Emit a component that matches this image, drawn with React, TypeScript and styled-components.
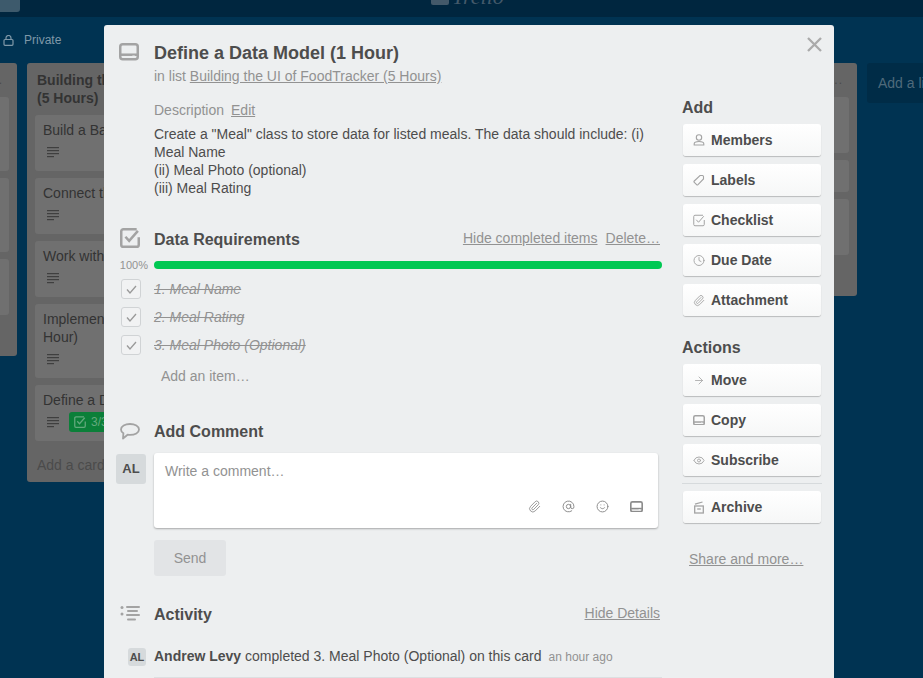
import { FC, ReactNode } from "react";
import styled, { createGlobalStyle } from "styled-components";
import { ArrowRight, AtSign, Clock, Eye, Paperclip, Smile } from "lucide-react";

const GlobalStyle = createGlobalStyle`
    html, body { margin: 0; height: 100%; overflow: hidden; }
    body {
        font-family: "Liberation Sans", Arial, sans-serif;
        font-size: 14px;
        line-height: 18px;
        color: #4d4d4d;
        background: #003352;
    }
`;

// --- icons that the packages don't have in this shape

const CardIcon: FC<{ size: number }> = ({ size }) => (
    <svg width={size} height={size * 0.88} viewBox="0 0 24 21" fill="none">
        <rect x="1.5" y="1.5" width="21" height="18" rx="3" stroke="currentColor" strokeWidth="3" />
        <rect x="2" y="12.5" width="20" height="3" fill="currentColor" />
        <rect x="16" y="15" width="3" height="2" fill="#edeff0" />
    </svg>
);

const CheckBoxIcon: FC<{ size: number; weight?: number }> = ({ size, weight = 3 }) => (
    <svg width={size} height={size} viewBox="0 0 24 24" fill="none">
        <path d="M20 1.5H4A2.5 2.5 0 0 0 1.5 4v16A2.5 2.5 0 0 0 4 22.5h16a2.5 2.5 0 0 0 2.5-2.5v-9" stroke="currentColor" strokeWidth={weight} />
        <path d="M6.5 10.5 11 15.5 21.5 3.5" stroke="currentColor" strokeWidth={weight} />
    </svg>
);

const BubbleIcon = () => (
    <svg width="20" height="17" viewBox="0 0 20 17" fill="none">
        <path d="M10 1C5 1 1 3 1 6.5c0 1.6 1 2.9 2.4 3.8L3 15.5l4.6-3.8c.8.1 1.6.2 2.4.2 5 0 9-2.100 9-5.400S15 1 10 1Z" stroke="currentColor" strokeWidth="1.8" strokeLinejoin="round" />
    </svg>
);

const ActivityIcon = () => (
    <svg width="20" height="17" viewBox="0 0 20 17" fill="currentColor">
        <circle cx="2" cy="2.500" r="1.500" />
        <circle cx="2" cy="9" r="1.500" />
        <rect x="6" y="1" width="14" height="2" rx="1" />
        <rect x="7" y="5" width="11" height="2" rx="1" />
        <rect x="6" y="9" width="14" height="2" rx="1" />
        <rect x="7" y="13.500" width="9" height="2" rx="1" />
    </svg>
);

const PersonIcon = () => (
    <svg width="12" height="12" viewBox="0 0 12 12" fill="none" stroke="currentColor" strokeWidth="1.100">
        <circle cx="6" cy="3.500" r="2.700" />
        <path d="M1.200 11V9.800C1.200 8.500 3 7.500 6 7.500s4.800 1 4.800 2.300V11Z" />
    </svg>
);

const TagIcon = () => (
    <svg width="12" height="12" viewBox="0 0 12 12" fill="none" stroke="currentColor" strokeWidth="1.100">
        <path d="M7 1.500h2.500a1.200 1.200 0 0 1 1 1V5L5 10.700a1 1 0 0 1-1.400 0L1.300 8.400a1 1 0 0 1 0-1.400Z" />
    </svg>
);

const ArchiveIcon = () => (
    <svg width="12" height="13" viewBox="0 0 12 13" fill="none" stroke="currentColor" strokeWidth="1.300">
        <path d="M2 3.200 9.500 1" />
        <rect x="1.700" y="5" width="8.600" height="7" />
        <path d="M4.200 8h3.600" />
    </svg>
);

const LockIcon = () => (
    <svg width="11" height="11" viewBox="0 0 11 11" fill="none" stroke="currentColor" strokeWidth="1.200">
        <rect x="1" y="4.500" width="9" height="5.800" rx="1" />
        <path d="M3 4.500V3a2.500 2.500 0 0 1 5 0v1.500" />
    </svg>
);

const LinesIcon = () => (
    <svg width="12" height="11" viewBox="0 0 12 11" fill="currentColor">
        <rect y="0" width="12" height="1.200" />
        <rect y="3" width="12" height="1.200" />
        <rect y="6" width="12" height="1.200" />
        <rect y="9" width="7" height="1.200" />
    </svg>
);

// --- dimmed board behind the card

const Page = styled.div`
    position: relative;
    height: 100vh;
    overflow: hidden;
`;

const TopBar = styled.header`
    display: flex;
    height: 17px;
    background: #00263f;
    overflow: hidden;
`;

const BackButton = styled.div`
    width: 20px;
    height: 12px;
    background: #3d5a6c;
    border-radius: 0 0 3px 0;
`;

const Logo = styled.div`
    display: flex;
    align-items: flex-end;
    gap: 3px;
    height: 5px;
    margin-left: 411px;
    color: #43596a;
    font-family: "Liberation Serif", serif;
    font-style: italic;
    font-size: 22px;
    line-height: 16px;
`;

const LogoMark = styled.div`
    width: 18px;
    height: 5px;
    background: #43596a;
    border-radius: 0 0 2px 2px;
    flex: none;
`;

const BoardBar = styled.div`
    display: flex;
    align-items: center;
    gap: 10px;
    height: 46px;
    padding-left: 3px;
    color: #7f98a8;
    font-size: 12px;
`;

const Board = styled.div`
    display: flex;
    align-items: flex-start;
    gap: 10px;
    margin-left: -253px;
`;

const List = styled.section`
    flex: none;
    width: 270px;
    box-sizing: border-box;
    padding: 8px 8px 0;
    background: #656565;
    border-radius: 3px;
    color: #333;
`;

const ListTitle = styled.h2`
    margin: 0;
    padding: 0 40px 8px 2px;
    font-size: 14px;
    line-height: 18px;
    font-weight: bold;
`;

const ListDots = styled.div`
    height: 18px;
    margin-bottom: 8px;
    padding-right: 6px;
    text-align: right;
    color: #4a4a4a;
    font-size: 12px;
    letter-spacing: 1px;
`;

const Card = styled.div<{ $height: number }>`
    height: ${p => p.$height}px;
    box-sizing: border-box;
    margin-bottom: 7px;
    padding: 6px 8px;
    background: #707070;
    border-radius: 3px;
`;

const CardBadges = styled.div`
    display: flex;
    align-items: center;
    gap: 10px;
    height: 20px;
    margin-top: 3px;
    padding-left: 4px;
    color: #3f3f3f;
`;

const CheckBadge = styled.span`
    display: flex;
    align-items: center;
    gap: 5px;
    height: 20px;
    padding: 0 6px 0 5px;
    background: #0b7f39;
    border-radius: 3px;
    color: #63a97d;
    font-size: 12px;
`;

const AddCard = styled.div`
    padding: 8px 2px;
    color: #4b4b4b;
`;

const AddList = styled.div`
    flex: none;
    width: 270px;
    height: 40px;
    box-sizing: border-box;
    padding: 11px;
    background: #002c47;
    border-radius: 3px;
    color: #4f6a7b;
`;

// --- card window

const Overlay = styled.div`
    position: absolute;
    inset: 0;
    padding: 25px 0 0 104px;
    overflow: hidden;
`;

const Window = styled.div`
    position: relative;
    display: flex;
    gap: 20px;
    width: 730px;
    height: 700px;
    box-sizing: border-box;
    padding-right: 12px;
    background: #edeff0;
    border-radius: 3px 3px 0 0;
`;

const CloseButton = styled.svg`
    position: absolute;
    top: 12px;
    right: 12px;
    color: #aaa;
`;

const Main = styled.main`
    flex: none;
    width: 558px;
    padding-top: 16px;
`;

const Row = styled.div<{ $top?: number }>`
    display: flex;
    margin-top: ${p => p.$top ?? 0}px;
`;

const IconCell = styled.div<{ $left?: number; $right?: number; $lift?: number }>`
    flex: none;
    width: 50px;
    box-sizing: border-box;
    display: flex;
    justify-content: center;
    align-items: center;
    padding: 0 ${p => p.$right ?? 0}px ${p => p.$lift ?? 0}px ${p => p.$left ?? 0}px;
    color: #a3a3a3;
`;

const Grow = styled.div`
    flex: 1;
    min-width: 0;
`;

const Title = styled.h1`
    margin: 0;
    font-size: 18px;
    line-height: 24px;
    font-weight: bold;
    color: #4d4d4d;
`;

const Muted = styled.div<{ $top?: number }>`
    margin-top: ${p => p.$top ?? 0}px;
    color: #929292;
`;

const TextLink = styled.a`
    color: #929292;
    text-decoration: underline;
`;

const EditLink = styled(TextLink)`
    margin-left: 7px;
`;

const Description = styled.p`
    margin: 6px 0 0;
    width: 500px;
    color: #4d4d4d;
`;

const SectionHead = styled.div`
    display: flex;
    align-items: center;
    justify-content: space-between;
    height: 24px;
    width: 506px;
`;

const SectionTitle = styled.h3`
    margin: 0;
    padding-top: 2px;
    font-size: 16px;
    line-height: 24px;
    font-weight: bold;
    color: #4d4d4d;
`;

const HeadLinks = styled.div`
    display: flex;
    gap: 8px;
    padding-bottom: 2px;
`;

const Percent = styled.div`
    flex: none;
    width: 44px;
    height: 8px;
    margin-right: 6px;
    text-align: right;
    font-size: 11px;
    line-height: 8px;
    color: #929292;
`;

const ProgressBar = styled.div`
    flex: 1;
    height: 8px;
    background: #00c853;
    border-radius: 4px;
`;

const CheckItem = styled.div`
    display: flex;
    align-items: center;
    height: 28px;
`;

const CheckCell = styled.div`
    flex: none;
    width: 50px;
    box-sizing: border-box;
    padding-left: 17px;
`;

const CheckBox = styled.div`
    display: flex;
    align-items: center;
    justify-content: center;
    width: 20px;
    height: 20px;
    box-sizing: border-box;
    border: 1px solid #d0d3d5;
    border-radius: 3px;
    background: #f1f2f3;
    color: #999;
`;

const DoneText = styled.span`
    font-style: italic;
    text-decoration: line-through;
    color: #929292;
`;

const AddItem = styled.div`
    margin: 8px 0 0 57px;
    color: #929292;
`;

const AvatarCell = styled.div`
    flex: none;
    width: 50px;
    box-sizing: border-box;
    padding: 1px 0 0 12px;
`;

const Avatar = styled.div`
    display: flex;
    align-items: center;
    justify-content: center;
    width: 30px;
    height: 30px;
    background: #d6dadc;
    border-radius: 3px;
    font-size: 13px;
    font-weight: bold;
    color: #4d4d4d;
`;

const SmallAvatar = styled(Avatar)`
    width: 18px;
    height: 18px;
    font-size: 11px;
`;

const CommentBox = styled.div`
    display: flex;
    flex-direction: column;
    justify-content: space-between;
    width: 504px;
    height: 75px;
    box-sizing: border-box;
    padding: 9px 15px 15px 11px;
    background: #fff;
    border-radius: 3px;
    box-shadow: 0 1px 2px rgba(0, 0, 0, 0.3);
    color: #929292;
`;

const CommentTools = styled.div`
    display: flex;
    justify-content: flex-end;
    align-items: center;
    gap: 21px;
    color: #8c8c8c;
`;

const SendButton = styled.button`
    display: block;
    width: 72px;
    height: 36px;
    margin: 12px 0 0 50px;
    padding: 0;
    border: 0;
    border-radius: 3px;
    background: #e2e4e6;
    color: #929292;
    font: inherit;
`;

const ActivityEntry = styled.div`
    display: flex;
    margin-top: 20px;
`;

const EntryAvatarCell = styled.div`
    flex: none;
    width: 50px;
    box-sizing: border-box;
    padding: 2px 0 0 24px;
`;

const EntryBody = styled.div`
    flex: 1;
    padding-bottom: 10px;
    border-bottom: 1px solid #dcdfe1;
    line-height: 20px;
`;

const Author = styled.strong`
    font-weight: bold;
`;

const TimeStamp = styled.span`
    margin-left: 7px;
    font-size: 12px;
    color: #929292;
`;

const Sidebar = styled.aside`
    flex: none;
    width: 140px;
    padding-top: 73px;
`;

const SideTitle = styled.h3<{ $top?: number }>`
    margin: ${p => p.$top ?? 0}px 0 6px;
    font-size: 16px;
    line-height: 20px;
    font-weight: bold;
    color: #4d4d4d;
`;

const SideButton = styled.button`
    display: flex;
    align-items: center;
    gap: 6px;
    width: 138px;
    height: 32px;
    margin: 0 1px 8px;
    padding: 0 0 0 10px;
    border: 0;
    border-radius: 3px;
    background: linear-gradient(to bottom, #fff, #f6f7f7);
    box-shadow: 0 1px 1px rgba(0, 0, 0, 0.22);
    color: #4d4d4d;
    font: inherit;
    font-weight: bold;
    text-align: left;
`;

const SideIcon = styled.span`
    display: flex;
    align-items: center;
    justify-content: center;
    width: 12px;
    height: 14px;
    color: #a3a3a3;
`;

const SideDivider = styled.hr`
    height: 1px;
    margin: -1px 0 7px;
    border: 0;
    background: #d6dadc;
`;

const ShareLink = styled(TextLink)`
    display: block;
    margin: 27px 0 0 7px;
`;

const ADD_ACTIONS = [
    { label: "Members", icon: <PersonIcon /> },
    { label: "Labels", icon: <TagIcon /> },
    { label: "Checklist", icon: <CheckBoxIcon size={13} weight={2} /> },
    { label: "Due Date", icon: <Clock size={13} strokeWidth={1.8} /> },
    { label: "Attachment", icon: <Paperclip size={13} strokeWidth={1.8} /> },
];

const CARD_ACTIONS = [
    { label: "Move", icon: <ArrowRight size={13} strokeWidth={1.6} /> },
    { label: "Copy", icon: <CardIcon size={12} /> },
    { label: "Subscribe", icon: <Eye size={13} strokeWidth={1.8} /> },
];

const CHECK_ITEMS = ["1. Meal Name", "2. Meal Rating", "3. Meal Photo (Optional)"];

const SideAction: FC<{ label: string; icon: ReactNode }> = ({ label, icon }) => (
    <SideButton>
        <SideIcon>{icon}</SideIcon>
        {label}
    </SideButton>
);

export default function App() {
    return (
        <Page>
            <GlobalStyle />
            <TopBar>
                <BackButton />
                <Logo><LogoMark />Trello</Logo>
            </TopBar>
            <BoardBar><LockIcon />Private</BoardBar>
            <Board>
                <List>
                    <ListDots>...</ListDots>
                    <Card $height={74} />
                    <Card $height={74} />
                    <Card $height={56} />
                    <AddCard>Add a card…</AddCard>
                </List>
                <List>
                    <ListTitle>Building the UI of FoodTracker (5 Hours)</ListTitle>
                    <Card $height={56}>Build a Basic UI<CardBadges><LinesIcon /></CardBadges></Card>
                    <Card $height={56}>Connect the UI to Code<CardBadges><LinesIcon /></CardBadges></Card>
                    <Card $height={56}>Work with View Controllers<CardBadges><LinesIcon /></CardBadges></Card>
                    <Card $height={74}>Implement a Custom Control (1<br />Hour)<CardBadges><LinesIcon /></CardBadges></Card>
                    <Card $height={56}>
                        Define a Data Model (1 Hour)
                        <CardBadges><LinesIcon /><CheckBadge><CheckBoxIcon size={12} weight={2.500} />3/3</CheckBadge></CardBadges>
                    </Card>
                    <AddCard>Add a card…</AddCard>
                </List>
                <List>
                    <ListDots>...</ListDots>
                    <Card $height={56} />
                    <AddCard>Add a card…</AddCard>
                </List>
                <List>
                    <ListDots>...</ListDots>
                    <Card $height={56} />
                    <Card $height={32} />
                    <Card $height={56} />
                    <AddCard>Add a card…</AddCard>
                </List>
                <AddList>Add a list…</AddList>
            </Board>

            <Overlay>
                <Window>
                    <CloseButton width="15" height="15" viewBox="0 0 15 15" fill="none" stroke="currentColor" strokeWidth="2.300">
                        <path d="M1 1l13 13M14 1 1 14" />
                    </CloseButton>
                    <Main>
                        <Row>
                            <IconCell $right={1} $lift={2}><CardIcon size={20} /></IconCell>
                            <Grow><Title>Define a Data Model (1 Hour)</Title></Grow>
                        </Row>
                        <Row $top={2}>
                            <IconCell />
                            <Muted>in list <TextLink>Building the UI of FoodTracker (5 Hours)</TextLink></Muted>
                        </Row>
                        <Row $top={16}>
                            <IconCell />
                            <Grow>
                                <Muted>Description<EditLink>Edit</EditLink></Muted>
                                <Description>
                                    Create a "Meal" class to store data for listed meals. The data should include: (i)
                                    Meal Name<br />(ii) Meal Photo (optional)<br />(iii) Meal Rating
                                </Description>
                            </Grow>
                        </Row>
                        <Row $top={30}>
                            <IconCell $left={2} $lift={2}><CheckBoxIcon size={20} /></IconCell>
                            <SectionHead>
                                <SectionTitle>Data Requirements</SectionTitle>
                                <HeadLinks>
                                    <TextLink>Hide completed items</TextLink>
                                    <TextLink>Delete…</TextLink>
                                </HeadLinks>
                            </SectionHead>
                        </Row>
                        <Row $top={10}>
                            <Percent>100%</Percent>
                            <ProgressBar />
                        </Row>
                        <Row $top={6}>
                            <Grow>
                                {CHECK_ITEMS.map(item => (
                                    <CheckItem key={item}>
                                        <CheckCell>
                                            <CheckBox>
                                                <svg width="11" height="9" viewBox="0 0 11 9" fill="none" stroke="currentColor" strokeWidth="1.300">
                                                    <path d="M1 4.500 4 8l6-7" />
                                                </svg>
                                            </CheckBox>
                                        </CheckCell>
                                        <DoneText>{item}</DoneText>
                                    </CheckItem>
                                ))}
                                <AddItem>Add an item…</AddItem>
                            </Grow>
                        </Row>
                        <Row $top={34}>
                            <IconCell $left={2}><BubbleIcon /></IconCell>
                            <SectionHead><SectionTitle>Add Comment</SectionTitle></SectionHead>
                        </Row>
                        <Row $top={10}>
                            <AvatarCell><Avatar>AL</Avatar></AvatarCell>
                            <CommentBox>
                                Write a comment…
                                <CommentTools>
                                    <Paperclip size={13} strokeWidth={1.6} />
                                    <AtSign size={13} strokeWidth={1.8} />
                                    <Smile size={13} strokeWidth={1.8} />
                                    <CardIcon size={13} />
                                </CommentTools>
                            </CommentBox>
                        </Row>
                        <SendButton>Send</SendButton>
                        <Row $top={26}>
                            <IconCell $left={2} $lift={1}><ActivityIcon /></IconCell>
                            <SectionHead>
                                <SectionTitle>Activity</SectionTitle>
                                <HeadLinks><TextLink>Hide Details</TextLink></HeadLinks>
                            </SectionHead>
                        </Row>
                        <ActivityEntry>
                            <EntryAvatarCell><SmallAvatar>AL</SmallAvatar></EntryAvatarCell>
                            <EntryBody>
                                <Author>Andrew Levy</Author> completed 3. Meal Photo (Optional) on this card
                                <TimeStamp>an hour ago</TimeStamp>
                            </EntryBody>
                        </ActivityEntry>
                    </Main>
                    <Sidebar>
                        <SideTitle>Add</SideTitle>
                        {ADD_ACTIONS.map(a => <SideAction key={a.label} {...a} />)}
                        <SideTitle $top={22}>Actions</SideTitle>
                        {CARD_ACTIONS.map(a => <SideAction key={a.label} {...a} />)}
                        <SideDivider />
                        <SideAction label="Archive" icon={<ArchiveIcon />} />
                        <ShareLink>Share and more…</ShareLink>
                    </Sidebar>
                </Window>
            </Overlay>
        </Page>
    );
}
